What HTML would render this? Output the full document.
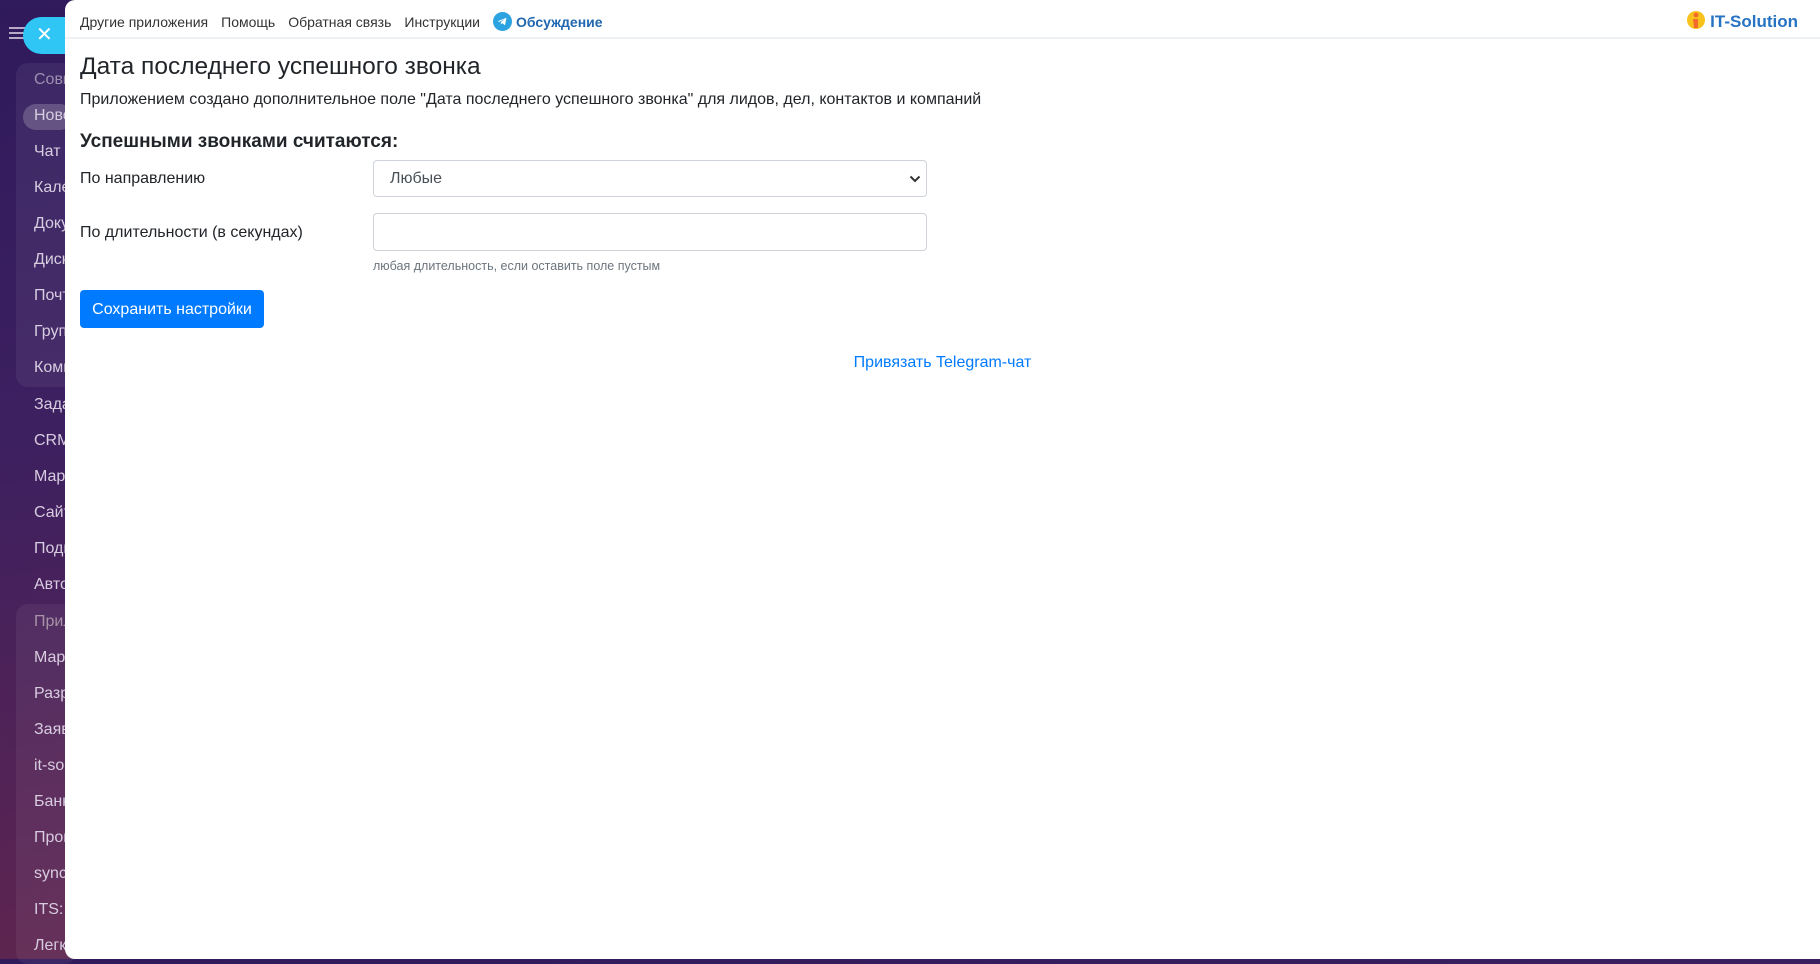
<!DOCTYPE html>
<html><head><meta charset="utf-8"><style>
*{box-sizing:border-box;margin:0;padding:0}
body{width:1820px;height:959px;overflow:hidden;font-family:"Liberation Sans",sans-serif;background:linear-gradient(170deg,#2f1a5c 0%,#3d2060 35%,#5a2452 70%,#6a2d45 100%);position:relative}
.side{position:absolute;left:0;top:0;width:70px;height:959px}
.side .it{position:absolute;left:34px;font-size:16px;color:#d8cde0;white-space:nowrap}
.grp{position:absolute;left:16px;width:60px;background:rgba(255,255,255,0.06);border-radius:12px}
.ham{position:absolute;left:9px;top:27px;width:16px;height:2px;background:#b9a9c9;box-shadow:0 5px 0 #b9a9c9,0 10px 0 #b9a9c9}
.close{position:absolute;left:23px;top:17px;width:60px;height:37px;border-radius:19px;background:#2fc6f6;color:#fff;font-size:20px;line-height:37px;padding-left:13px}
.panel{position:absolute;left:65px;top:0;width:1755px;height:959px;background:#fff;border-radius:10px 0 0 10px}
.top{height:39px;border-bottom:2px solid #eef2f4;position:relative}
.nav{position:absolute;left:15px;top:12px;font-size:14px;color:#333;white-space:nowrap}
.nav span{margin-right:13px}
.nav .tg{color:#2067b0;font-weight:bold}
.tgi{display:inline-block;width:19px;height:19px;border-radius:50%;background:#2aa3e0;vertical-align:-4px;margin-right:4px;position:relative}
.logo{position:absolute;right:22px;top:10px;font-size:17px;font-weight:bold;color:#2673c4}
.c{position:absolute;left:15px;white-space:nowrap}
h1{font-size:24.5px;font-weight:normal;color:#212529}
.sel{position:absolute;left:308px;top:160px;width:554px;height:37px;border:1px solid #ced4da;border-radius:4px;font-size:16px;color:#495057;padding:9px 16px}
.inp{position:absolute;left:308px;top:213px;width:554px;height:38px;border:1px solid #ced4da;border-radius:4px}
.btn{position:absolute;left:15px;top:290px;width:184px;height:38px;background:#007bff;border-radius:4px;color:#fff;font-size:16px;text-align:center;line-height:39px}
</style></head><body>
<div class="side">
<div class="grp" style="top:63px;height:324px"></div>
<div class="grp" style="top:604px;height:360px"></div>
<div style="position:absolute;left:23px;top:104px;width:50px;height:26px;border-radius:13px;background:rgba(255,255,255,0.2)"></div>
<div class="ham"></div>
<div class="it" style="top:71px;color:#9d8fb0">Совм</div>
<div class="it" style="top:107px">Ново</div>
<div class="it" style="top:143px">Чат и</div>
<div class="it" style="top:179px">Кале</div>
<div class="it" style="top:215px">Доку</div>
<div class="it" style="top:251px">Диск</div>
<div class="it" style="top:287px">Почт</div>
<div class="it" style="top:323px">Груп</div>
<div class="it" style="top:359px">Комм</div>
<div class="it" style="top:396px">Зада</div>
<div class="it" style="top:432px">CRM</div>
<div class="it" style="top:468px">Мар</div>
<div class="it" style="top:504px">Сайт</div>
<div class="it" style="top:540px">Подп</div>
<div class="it" style="top:576px">Авто</div>
<div class="it" style="top:613px;color:#a893a8">Прил</div>
<div class="it" style="top:649px">Мар</div>
<div class="it" style="top:685px">Разр</div>
<div class="it" style="top:721px">Заяв</div>
<div class="it" style="top:757px">it-sol</div>
<div class="it" style="top:793px">Банк</div>
<div class="it" style="top:829px">Прог</div>
<div class="it" style="top:865px">sync</div>
<div class="it" style="top:901px">ITS: C</div>
<div class="it" style="top:937px">Легк</div>
<div class="close">✕</div>
</div>
<div class="panel">
<div class="top">
<div class="nav"><span>Другие приложения</span><span>Помощь</span><span>Обратная связь</span><span>Инструкции</span><span class="tg"><i class="tgi"><svg width="19" height="19" viewBox="0 0 19 19" style="position:absolute;left:0;top:0"><path d="M4.5 9.3l9-3.6-1.5 7.6-2.8-2.2-1.5 1.4.2-2.3 3.6-3.3-4.6 2.8z" fill="#fff"/></svg></i>Обсуждение</span></div>
<div class="logo"><svg width="20" height="20" viewBox="0 0 20 20" style="vertical-align:-3px;margin-right:4px"><circle cx="10" cy="10" r="9" fill="#f7c21b"/><circle cx="10" cy="5" r="2.4" fill="#f26a2c"/><path d="M7 9h5v9h-4z" fill="#f26a2c"/></svg>IT-Solution</div>
</div>
<h1 class="c" style="top:53px">Дата последнего успешного звонка</h1>
<div class="c" style="top:91px;font-size:16px;color:#212529">Приложением создано дополнительное поле "Дата последнего успешного звонка" для лидов, дел, контактов и компаний</div>
<div class="c" style="top:131px;font-size:19px;font-weight:bold;color:#212529">Успешными звонками считаются:</div>
<div class="c" style="top:170px;font-size:16px;color:#212529">По направлению</div>
<div class="sel">Любые<svg width="12" height="8" viewBox="0 0 12 8" style="position:absolute;right:5px;top:14px"><path d="M1.5 1.5l4.5 4.5 4.5-4.5" stroke="#333" stroke-width="2" fill="none"/></svg></div>
<div class="c" style="top:224px;font-size:16px;color:#212529">По длительности (в секундах)</div>
<div class="inp"></div>
<div style="position:absolute;left:308px;top:259px;font-size:12.5px;color:#6c757d">любая длительность, если оставить поле пустым</div>
<div class="btn">Сохранить настройки</div>
<div style="position:absolute;left:0;width:1755px;top:354px;text-align:center;font-size:16px;color:#007bff">Привязать Telegram-чат</div>
</div>
</body></html>
